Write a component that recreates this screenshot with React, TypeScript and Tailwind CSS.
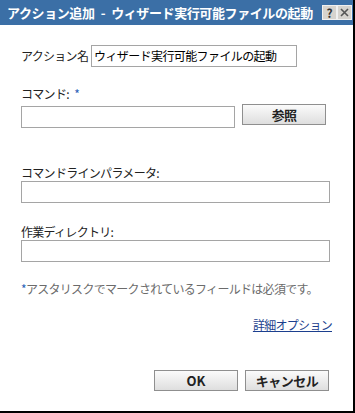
import React from "react";

const jp = { fontFamily: '"Noto Sans CJK JP", "Noto Sans", sans-serif' };

function Field({ className = "", value = "" }: { className?: string; value?: string }) {
  return (
    <div className={`h-[22px] border border-[#a5a5a5] bg-white ${className}`}>
      <span className="block whitespace-nowrap pl-[2px] text-[12px] leading-[20px] tracking-[-0.6px] text-black">{value}</span>
    </div>
  );
}

function Btn({ children, className = "" }: { children: React.ReactNode; className?: string }) {
  return (
    <button
      className={`flex h-[21px] items-center justify-center border border-[#8f8f8f] bg-gradient-to-b from-[#fbfbfb] to-[#dedede] text-[13px] font-bold text-[#222] ${className}`}
    >
      {children}
    </button>
  );
}

export default function App() {
  return (
    <div className="h-[413px] w-[355px] border-b-2 border-r-2 border-black bg-white" style={jp}>
      {/* title bar */}
      <div className="flex h-[25px] items-center justify-between bg-[#3b6fa6] pl-[7px] pr-[1px]">
        <span className="whitespace-pre text-[13px] font-bold tracking-[-0.4px] text-white">
          {"アクション追加\u2002-\u2002ウィザード実行可能ファイルの起動"}
        </span>
        <div className="flex">
          <div className="flex h-[15px] w-[15px] items-center justify-center border border-[#f0f0f0] bg-[#d6d3ce] text-[12px] font-bold leading-none text-[#333]">
            ?
          </div>
          <div className="flex h-[15px] w-[15px] items-center justify-center border border-[#f0f0f0] bg-[#d6d3ce]">
            <svg width="9" height="9" viewBox="0 0 9 9">
              <path d="M1 1 L8 8 M8 1 L1 8" stroke="#555" strokeWidth="1.6" />
            </svg>
          </div>
        </div>
      </div>

      <div className="px-[21px] text-[12px] tracking-[-0.7px] text-[#222]">
        <div className="mt-[20px] flex items-center">
          <span className="w-[70px] flex-none whitespace-nowrap">アクション名</span>
          <Field className="w-[206px]" value="ウィザード実行可能ファイルの起動" />
        </div>

        <div className="mt-[19px] whitespace-pre leading-[16px]">
          {"コマンド:\u2002"}
          <span className="text-[#2a62b8]">*</span>
        </div>
        <div className="mt-[2px] flex items-start gap-[7px]">
          <Field className="mt-[2px] w-[214px]" />
          <Btn className="w-[84px]">参照</Btn>
        </div>

        <div className="mt-[37px] leading-[16px]">コマンドラインパラメータ:</div>
        <Field className="w-[309px]" />

        <div className="mt-[21px] leading-[16px]">作業ディレクトリ:</div>
        <Field className="w-[309px]" />

        <div className="mt-[19px] whitespace-nowrap leading-[16px] text-[#6b6b6b]">
          <span className="text-[#2a62b8]">*</span>アスタリスクでマークされているフィールドは必須です。
        </div>

        <div className="mt-[20px] flex justify-end">
          <a className="leading-[16px] text-[#1c3f8e] underline">詳細オプション</a>
        </div>

        <div className="mt-[37px] flex justify-end gap-[7px] pr-[3px]">
          <Btn className="w-[84px] tracking-normal">OK</Btn>
          <Btn className="w-[84px] tracking-[-0.5px]">キャンセル</Btn>
        </div>
      </div>
    </div>
  );
}
